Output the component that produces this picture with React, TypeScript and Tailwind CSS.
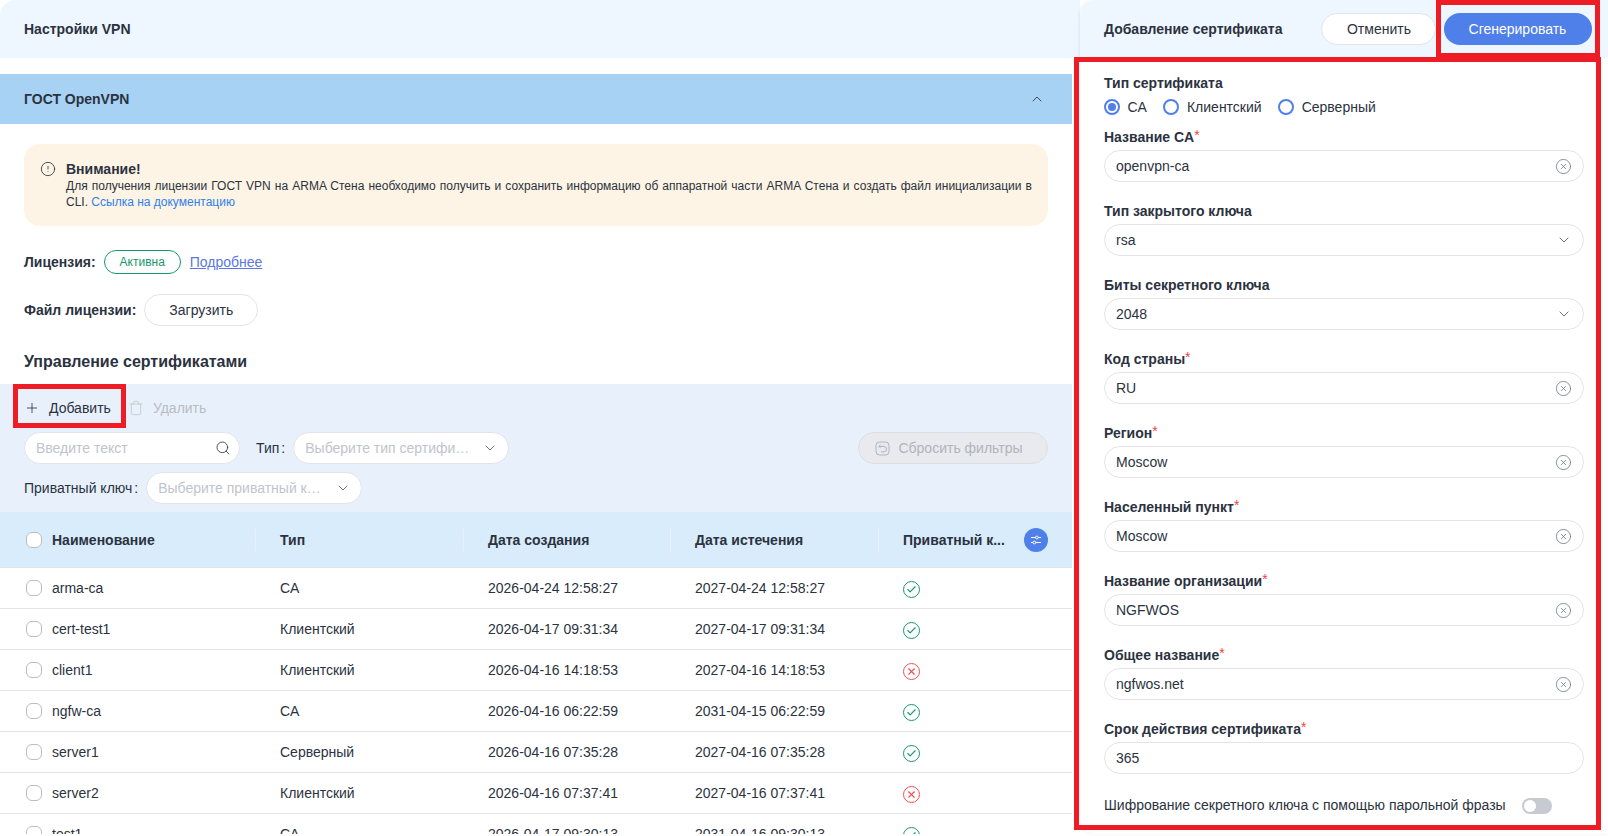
import { Check, ChevronDown, ChevronUp, CircleAlert, CircleX, Plus, Search, Trash, X } from 'lucide-react';

type Row = { name: string; type: string; created: string; expires: string; ok: boolean };

const rows: Row[] = [
  { name: 'arma-ca', type: 'CA', created: '2026-04-24 12:58:27', expires: '2027-04-24 12:58:27', ok: true },
  { name: 'cert-test1', type: 'Клиентский', created: '2026-04-17 09:31:34', expires: '2027-04-17 09:31:34', ok: true },
  { name: 'client1', type: 'Клиентский', created: '2026-04-16 14:18:53', expires: '2027-04-16 14:18:53', ok: false },
  { name: 'ngfw-ca', type: 'CA', created: '2026-04-16 06:22:59', expires: '2031-04-15 06:22:59', ok: true },
  { name: 'server1', type: 'Серверный', created: '2026-04-16 07:35:28', expires: '2027-04-16 07:35:28', ok: true },
  { name: 'server2', type: 'Клиентский', created: '2026-04-16 07:37:41', expires: '2027-04-16 07:37:41', ok: false },
  { name: 'test1', type: 'CA', created: '2026-04-17 09:30:13', expires: '2031-04-16 09:30:13', ok: true },
];

const inputs = [
  { label: 'Название CA', value: 'openvpn-ca', kind: 'clear', required: true },
  { label: 'Тип закрытого ключа', value: 'rsa', kind: 'select', required: false },
  { label: 'Биты секретного ключа', value: '2048', kind: 'select', required: false },
  { label: 'Код страны', value: 'RU', kind: 'clear', required: true },
  { label: 'Регион', value: 'Moscow', kind: 'clear', required: true },
  { label: 'Населенный пункт', value: 'Moscow', kind: 'clear', required: true },
  { label: 'Название организации', value: 'NGFWOS', kind: 'clear', required: true },
  { label: 'Общее название', value: 'ngfwos.net', kind: 'clear', required: true },
  { label: 'Срок действия сертификата', value: '365', kind: 'none', required: true },
];

function Radio({ label, checked }: { label: string; checked?: boolean }) {
  return (
    <div className="flex items-center gap-[7.5px]">
      <span className="flex h-4 w-4 items-center justify-center rounded-full border-2 border-[#4f7fe8] bg-white">
        {checked && <span className="h-2 w-2 rounded-full bg-[#4f7fe8]" />}
      </span>
      <span>{label}</span>
    </div>
  );
}

function Field({ label, value, kind, required }: { label: string; value: string; kind: string; required: boolean }) {
  return (
    <div className="mb-[16px]">
      <div className="h-[26px] font-bold leading-[27px]">
        {label}
        {required && <span className="relative -top-0.5 font-normal text-[#ef4444]">*</span>}
      </div>
      <div className="flex h-8 items-center justify-between rounded-full border border-[#e2e4e8] bg-white pr-[11px] pl-[11px]">
        <span>{value}</span>
        {kind === 'clear' && <CircleX size={17} strokeWidth={1.1} className="text-[#6b7280]" />}
        {kind === 'select' && <ChevronDown size={16} strokeWidth={1.25} className="text-[#4b5563]" />}
      </div>
    </div>
  );
}

function FilterSelect({ placeholder, className }: { placeholder: string; className: string }) {
  return (
    <div className={`flex h-8 items-center justify-between rounded-full border border-[#e2e4e8] bg-white pr-[10px] pl-[11px] ${className}`}>
      <span className="whitespace-nowrap text-[#c0c4cc]">{placeholder}</span>
      <ChevronDown size={16} strokeWidth={1.25} className="shrink-0 text-[#4b5563]" />
    </div>
  );
}

function Box() {
  return <span className="h-4 w-4 shrink-0 rounded-[6px] border border-[#b9bcc4] bg-white" />;
}

function ResetIcon() {
  return (
    <svg width="15" height="15" viewBox="0 0 15 15" fill="none" stroke="currentColor" strokeWidth="1">
      <rect x="1" y="1" width="13" height="13" rx="3.5" />
      <path d="M5.5 3.8 3.9 5.4 5.5 7" />
      <path d="M4 5.4h4.8a2.7 2.7 0 0 1 0 5.4H6" />
    </svg>
  );
}

function SlidersIcon() {
  return (
    <svg width="12" height="12" viewBox="0 0 12 12" fill="none" stroke="currentColor" strokeWidth="1">
      <path d="M1 3.5h4.4M8.4 3.5H11M1 8.5h1.8M5.8 8.5H11" />
      <circle cx="6.9" cy="3.5" r="1.4" />
      <circle cx="4.3" cy="8.5" r="1.4" />
    </svg>
  );
}

export default function App() {
  return (
    <div className="relative h-[836px] w-[1608px] overflow-hidden bg-white font-['Liberation_Sans',Arial,sans-serif] text-[14px] text-[#2b3240]">
      <div className="flex h-[834px]">
        <div className="w-[1080px] shrink-0 overflow-hidden rounded-l-2xl">
          <div className="flex h-[58px] items-center bg-[#eef6ff] pl-6 font-bold">Настройки VPN</div>

          <div className="w-[1072px]">
            <div className="mt-4 flex h-[50px] items-center justify-between bg-[#a8d2f3] pr-[27px] pl-6 font-bold">
              ГОСТ OpenVPN
              <ChevronUp size={16} strokeWidth={1.25} />
            </div>

            <div className="px-6">
              <div className="mt-5 flex h-[82px] gap-[10px] rounded-2xl bg-[#fdf4e5] pt-4 pr-4 pl-4">
                <CircleAlert size={16} strokeWidth={1.25} className="mt-[1px] shrink-0" />
                <div>
                  <div className="font-bold leading-[18px]">Внимание!</div>
                  <div className="text-justify text-[12px] leading-4">
                    Для получения лицензии ГОСТ VPN на ARMA Стена необходимо получить и сохранить информацию об аппаратной части ARMA Стена и создать файл инициализации в CLI.{' '}
                    <span className="text-[#2f80ed]">Ссылка на документацию</span>
                  </div>
                </div>
              </div>

              <div className="mt-6 flex h-6 items-center">
                <span className="font-bold">Лицензия:</span>
                <span className="ml-2 flex h-6 w-[77px] items-center justify-center rounded-full border border-[#16986a] text-[12px] text-[#16986a]">Активна</span>
                <span className="ml-[9px] text-[#5b78e0] underline">Подробнее</span>
              </div>

              <div className="mt-[20px] flex h-8 items-center">
                <span className="font-bold">Файл лицензии:</span>
                <span className="ml-2 flex h-8 w-[114px] items-center justify-center rounded-full border border-[#e2e4e8]">Загрузить</span>
              </div>

              <div className="mt-[25px] text-[16px] leading-[22px] font-bold">Управление сертификатами</div>
            </div>

            <div className="mt-[11px] h-[128px] bg-[#e8f1fb] px-6">
              <div className="flex h-[48px] items-center">
                <Plus size={16} strokeWidth={1.25} />
                <span className="ml-[9px]">Добавить</span>
                <Trash size={16} strokeWidth={1} className="ml-[17px] text-[#b8bcc4]" />
                <span className="ml-[9px] text-[#b8bcc4]">Удалить</span>
              </div>
              <div className="flex items-center">
                <div className="flex h-8 w-[216px] items-center justify-between rounded-full border border-[#e2e4e8] bg-white pr-[8px] pl-[11px]">
                  <span className="text-[#c0c4cc]">Введите текст</span>
                  <Search size={16} strokeWidth={1.25} />
                </div>
                <span className="ml-4">Тип<span className="ml-[2px]">:</span></span>
                <FilterSelect placeholder="Выберите тип сертифи…" className="ml-2 w-[216px]" />
                <div className="ml-auto flex h-8 w-[190px] items-center justify-center gap-2 rounded-full border border-[#dcdfe3] bg-[#e8eaed] pr-2 text-[#b0b4bb]">
                  <ResetIcon />
                  Сбросить фильтры
                </div>
              </div>
              <div className="mt-2 flex items-center">
                <span>Приватный ключ<span className="ml-[2px]">:</span></span>
                <FilterSelect placeholder="Выберите приватный к…" className="ml-2 w-[216px]" />
              </div>
            </div>

            <div className="flex h-[56px] items-center border-b border-[#dfe2e6] bg-[#d9ecfb] font-bold">
              <div className="flex h-[22px] w-[256px] items-center gap-2.5 border-r border-[#e6f1fb] pl-[26px]"><Box /><span className="pt-[2px]">Наименование</span></div>
              <div className="flex h-[22px] w-[208px] items-center border-r border-[#e6f1fb] pt-[2px] pl-6">Тип</div>
              <div className="flex h-[22px] w-[207px] items-center border-r border-[#e6f1fb] pt-[2px] pl-6">Дата создания</div>
              <div className="flex h-[22px] w-[208px] items-center border-r border-[#e6f1fb] pt-[2px] pl-6">Дата истечения</div>
              <div className="pt-[2px] pl-6">Приватный к...</div>
              <span className="ml-[19px] flex h-6 w-6 items-center justify-center rounded-full bg-[#4f7fe8] text-white">
                <SlidersIcon />
              </span>
            </div>

            {rows.map((row) => (
              <div key={row.name} className="flex h-[41px] shrink-0 items-center border-b border-[#e2e4e8]">
                <div className="flex w-[256px] items-center gap-2.5 pl-[26px]"><Box />{row.name}</div>
                <div className="w-[208px] pl-6">{row.type}</div>
                <div className="w-[207px] pl-6">{row.created}</div>
                <div className="w-[208px] pl-6">{row.expires}</div>
                <div className="mt-[2px] pl-6">
                  <span className={`flex h-[17px] w-[17px] items-center justify-center rounded-full border-[1.5px] ${row.ok ? 'border-[#16986a] text-[#16986a]' : 'border-[#f0524f] text-[#f0524f]'}`}>
                    {row.ok ? <Check size={11} strokeWidth={2.5} /> : <X size={11} strokeWidth={2.5} />}
                  </span>
                </div>
              </div>
            ))}
          </div>
        </div>

        <div className="relative min-w-0 flex-1 rounded-l-2xl bg-white shadow-[-1px_0_3px_rgba(40,50,70,0.08)]">
          <div className="flex h-[58px] items-center rounded-tl-2xl bg-[#eef6ff] pl-6">
            <span className="font-bold">Добавление сертификата</span>
            <span className="ml-[39px] flex h-8 w-[115px] items-center justify-center rounded-full border border-[#e2e4e8] bg-white">Отменить</span>
            <span className="ml-2 flex h-8 w-[148px] items-center justify-center rounded-full bg-[#4f7fe8] pr-[2px] text-white">Сгенерировать</span>
          </div>
          <div className="px-6 pt-[14px]">
            <div className="h-[22px] leading-[22px] font-bold">Тип сертификата</div>
            <div className="mt-[3px] mb-[7px] flex h-5 items-center gap-[16.5px]">
              <Radio label="CA" checked />
              <Radio label="Клиентский" />
              <Radio label="Серверный" />
            </div>
            {inputs.map((f) => (
              <Field key={f.label} {...f} />
            ))}
            <div className="mt-[21px] flex items-center">
              <span>Шифрование секретного ключа с помощью парольной фразы</span>
              <span className="ml-[16px] flex h-4 w-[30px] items-center rounded-full bg-[#c7cad0] pl-[2px]">
                <span className="h-3 w-3 rounded-full bg-white" />
              </span>
            </div>
          </div>
        </div>
      </div>

      {/* red marks laid over the screenshot */}
      <div className="absolute top-[384px] left-[13px] h-[44px] w-[113px] border-[5px] border-[#ee1c25]" />
      <div className="absolute top-0 left-[1436px] h-[58px] w-[164px] border-[5px] border-[#ee1c25]" />
      <div className="absolute top-[57px] left-[1074px] h-[773px] w-[527px] border-[5px] border-[#ee1c25]" />
    </div>
  );
}
